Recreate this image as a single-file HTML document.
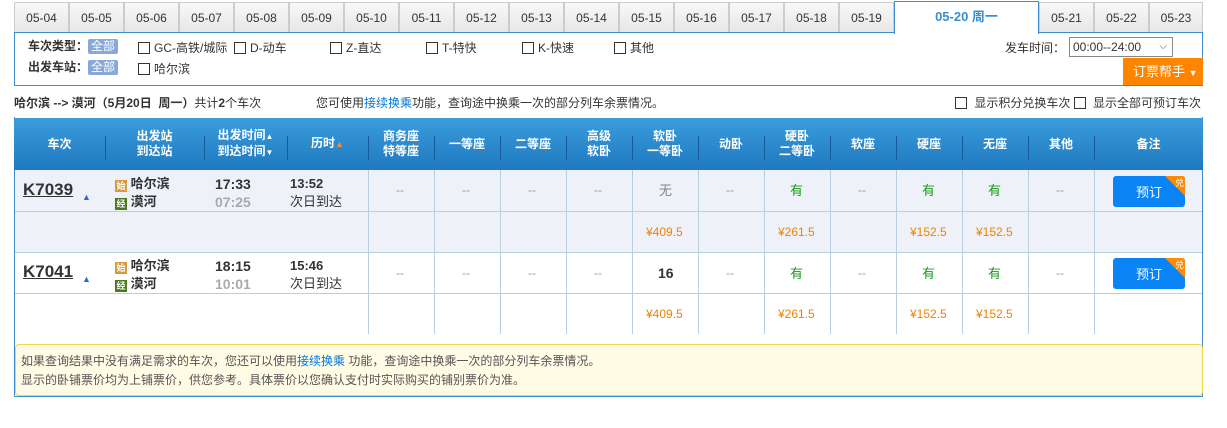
<!DOCTYPE html><html><head><meta charset="utf-8"><style>
*{margin:0;padding:0;box-sizing:border-box}
body{width:1227px;height:428px;background:#fff;font-family:"Liberation Sans","Noto Sans CJK SC",sans-serif;font-size:12px;color:#333;position:relative;overflow:hidden}
.a{position:absolute}
.tab{position:absolute;top:2px;height:31px;width:55px;border:1px solid #ccc;border-bottom:none;background:linear-gradient(#f8f8f8,#e6e6e6);text-align:center;line-height:30px;color:#333;font-size:12px}
.cb{display:inline-block;width:12px;height:12px;border:1px solid #333;vertical-align:-2px;margin-right:4px;background:#fff}
.all{display:inline-block;background:#87a8d8;color:#fff;padding:0 3px;line-height:15px;border-radius:2px;font-weight:normal}
.hd{position:absolute;top:118px;height:52px;background:linear-gradient(#3a9ddb,#1f78c0);color:#fff;font-weight:bold;}
.hc{position:absolute;top:0;height:52px;display:flex;align-items:center;justify-content:center;text-align:center;line-height:15px;font-size:12px;white-space:nowrap}
.sep{position:absolute;top:18px;height:24px;width:1px;background:#1a5a9a}
.dash{color:#999}
.y{color:#1a9a1a;font-size:13px}
.p{color:#f08200;font-size:12px}
.btn{position:absolute;width:72px;height:31px;background:#0a84f5;border-radius:3px;color:#fff;font-size:13px;display:flex;align-items:center;justify-content:center;overflow:hidden}
.btn:after{content:"";position:absolute;right:0;top:0;border-top:20px solid #ff8a00;border-left:20px solid transparent}
.btn i{position:absolute;right:1px;top:0;font-style:normal;font-size:9px;z-index:2;color:#fff}
.ic{display:inline-block;width:12px;height:12px;color:#fff;font-size:9px;line-height:12px;text-align:center;vertical-align:-1px}
</style></head><body>
<div class="tab" style="left:14px">05-04</div><div class="tab" style="left:69px">05-05</div><div class="tab" style="left:124px">05-06</div><div class="tab" style="left:179px">05-07</div><div class="tab" style="left:234px">05-08</div><div class="tab" style="left:289px">05-09</div><div class="tab" style="left:344px">05-10</div><div class="tab" style="left:399px">05-11</div><div class="tab" style="left:454px">05-12</div><div class="tab" style="left:509px">05-13</div><div class="tab" style="left:564px">05-14</div><div class="tab" style="left:619px">05-15</div><div class="tab" style="left:674px">05-16</div><div class="tab" style="left:729px">05-17</div><div class="tab" style="left:784px">05-18</div><div class="tab" style="left:839px">05-19</div>
<div class="a" style="left:894px;top:1px;width:145px;height:33px;background:#fff;border:1px solid #3c8dd0;border-bottom:none;text-align:center;line-height:30px;color:#3c8dd0;font-weight:bold;font-size:13px;z-index:2">05-20 周一</div>
<div class="tab" style="left:1039px">05-21</div><div class="tab" style="left:1094px">05-22</div><div class="tab" style="left:1149px;width:54px">05-23</div>
<div class="a" style="left:14px;top:32px;width:1189px;height:54px;border:1px solid #3c8dd0"></div>
<div class="a" style="left:28px;top:38px;line-height:16px"><b>车次类型：</b><span class="all">全部</span></div>
<div class="a" style="left:138px;top:39px"><span class="cb"></span>GC-高铁/城际</div>
<div class="a" style="left:234px;top:39px"><span class="cb"></span>D-动车</div>
<div class="a" style="left:330px;top:39px"><span class="cb"></span>Z-直达</div>
<div class="a" style="left:426px;top:39px"><span class="cb"></span>T-特快</div>
<div class="a" style="left:522px;top:39px"><span class="cb"></span>K-快速</div>
<div class="a" style="left:614px;top:39px"><span class="cb"></span>其他</div>
<div class="a" style="left:28px;top:59px;line-height:16px"><b>出发车站：</b><span class="all">全部</span></div>
<div class="a" style="left:138px;top:60px"><span class="cb"></span>哈尔滨</div>
<div class="a" style="left:1005px;top:39px">发车时间：</div>
<div class="a" style="left:1069px;top:37px;width:104px;height:20px;border:1px solid #888;line-height:18px;padding-left:3px">00:00--24:00<span style="position:absolute;right:5px;top:0;font-size:10px;color:#555">⌵</span></div>
<div class="a" style="left:1123px;top:58px;width:80px;height:27px;background:#ff8400;color:#fff;line-height:27px;padding-left:10px;font-size:13px">订票帮手 <span style="font-size:9px">▼</span></div>
<div class="a" style="left:14px;top:94px;font-size:12px"><b>哈尔滨 --&gt; 漠河（5月20日&nbsp; 周一）</b>共计<b>2</b>个车次</div>
<div class="a" style="left:316px;top:94px">您可使用<span style="color:#0077dd">接续换乘</span>功能，查询途中换乘一次的部分列车余票情况。</div>
<div class="a" style="left:955px;top:94px"><span class="cb"></span> 显示积分兑换车次 <span class="cb"></span> 显示全部可预订车次</div>
<div class="a" style="left:14px;top:117px;width:1189px;height:280px;border:1px solid #3c8dd0;border-top:none"></div>
<div class="hd" style="left:14px;width:1189px">
<div class="hc" style="left:0;width:91px">车次</div><div class="sep" style="left:91px"></div>
<div class="hc" style="left:91px;width:99px">出发站<br>到达站</div><div class="sep" style="left:190px"></div>
<div class="hc" style="left:190px;width:83px"><div>出发时间<span style="font-size:8px">▲</span><br>到达时间<span style="font-size:8px">▼</span></div></div><div class="sep" style="left:273px"></div>
<div class="hc" style="left:273px;width:81px"><div>历时<span style="color:#f08a3c;font-size:9px">▲</span></div></div><div class="sep" style="left:354px"></div>
<div class="hc" style="left:354px;width:66px">商务座<br>特等座</div><div class="sep" style="left:420px"></div>
<div class="hc" style="left:420px;width:66px">一等座</div><div class="sep" style="left:486px"></div>
<div class="hc" style="left:486px;width:66px">二等座</div><div class="sep" style="left:552px"></div>
<div class="hc" style="left:552px;width:66px">高级<br>软卧</div><div class="sep" style="left:618px"></div>
<div class="hc" style="left:618px;width:66px">软卧<br>一等卧</div><div class="sep" style="left:684px"></div>
<div class="hc" style="left:684px;width:66px">动卧</div><div class="sep" style="left:750px"></div>
<div class="hc" style="left:750px;width:66px">硬卧<br>二等卧</div><div class="sep" style="left:816px"></div>
<div class="hc" style="left:816px;width:66px">软座</div><div class="sep" style="left:882px"></div>
<div class="hc" style="left:882px;width:66px">硬座</div><div class="sep" style="left:948px"></div>
<div class="hc" style="left:948px;width:66px">无座</div><div class="sep" style="left:1014px"></div>
<div class="hc" style="left:1014px;width:66px">其他</div><div class="sep" style="left:1080px"></div>
<div class="hc" style="left:1080px;width:109px">备注</div>
</div>
<div class="a" style="left:15px;top:170px;width:1187px;height:83px;background:#eef1f8"></div>
<div class="a" style="left:15px;top:211px;width:1187px;height:1px;background:#b8cfe0"></div>
<div class="a" style="left:15px;top:252px;width:1187px;height:1px;background:#b8cfe0"></div>
<div class="a" style="left:15px;top:293px;width:1187px;height:1px;background:#b8cfe0"></div>
<div class="a" style="left:368px;top:170px;width:1px;height:164px;background:#b8cfe0"></div>
<div class="a" style="left:434px;top:170px;width:1px;height:164px;background:#b8cfe0"></div>
<div class="a" style="left:500px;top:170px;width:1px;height:164px;background:#b8cfe0"></div>
<div class="a" style="left:566px;top:170px;width:1px;height:164px;background:#b8cfe0"></div>
<div class="a" style="left:632px;top:170px;width:1px;height:164px;background:#b8cfe0"></div>
<div class="a" style="left:698px;top:170px;width:1px;height:164px;background:#b8cfe0"></div>
<div class="a" style="left:764px;top:170px;width:1px;height:164px;background:#b8cfe0"></div>
<div class="a" style="left:830px;top:170px;width:1px;height:164px;background:#b8cfe0"></div>
<div class="a" style="left:896px;top:170px;width:1px;height:164px;background:#b8cfe0"></div>
<div class="a" style="left:962px;top:170px;width:1px;height:164px;background:#b8cfe0"></div>
<div class="a" style="left:1028px;top:170px;width:1px;height:164px;background:#b8cfe0"></div>
<div class="a" style="left:1094px;top:170px;width:1px;height:164px;background:#b8cfe0"></div>

<div class="a" style="left:23px;top:180px;font-size:17px;font-weight:bold;text-decoration:underline;color:#333">K7039</div>
<div class="a" style="left:82px;top:192px;font-size:9px;color:#1a73d0">▲</div>
<div class="a" style="left:115px;top:175px;line-height:18px;font-size:13px;font-weight:bold"><span class="ic" style="background:#d79a3c">始</span> 哈尔滨<br><span class="ic" style="background:#4a7a1a">经</span> 漠河</div>
<div class="a" style="left:215px;top:175px;line-height:18px;font-size:14px;font-weight:bold">17:33<br><span style="color:#aaa">07:25</span></div>
<div class="a" style="left:290px;top:175px;line-height:18px;font-size:13px"><b>13:52</b><br>次日到达</div>
<div class="a" style="top:170px;height:41px;left:0;width:1227px;line-height:41px">
<span class="a dash" style="left:396px">--</span><span class="a dash" style="left:462px">--</span><span class="a dash" style="left:528px">--</span><span class="a dash" style="left:594px">--</span>
<span class="a" style="left:659px;color:#888;font-size:13px">无</span><span class="a dash" style="left:726px">--</span><span class="a y" style="left:790px">有</span><span class="a dash" style="left:858px">--</span><span class="a y" style="left:922px">有</span><span class="a y" style="left:988px">有</span><span class="a dash" style="left:1056px">--</span></div>
<div class="btn" style="left:1113px;top:176px"><i>兑</i>预订</div>
<div class="a p" style="left:646px;top:225px">¥409.5</div><div class="a p" style="left:778px;top:225px">¥261.5</div><div class="a p" style="left:910px;top:225px">¥152.5</div><div class="a p" style="left:976px;top:225px">¥152.5</div>

<div class="a" style="left:23px;top:262px;font-size:17px;font-weight:bold;text-decoration:underline;color:#333">K7041</div>
<div class="a" style="left:82px;top:274px;font-size:9px;color:#1a73d0">▲</div>
<div class="a" style="left:115px;top:257px;line-height:18px;font-size:13px;font-weight:bold"><span class="ic" style="background:#d79a3c">始</span> 哈尔滨<br><span class="ic" style="background:#4a7a1a">经</span> 漠河</div>
<div class="a" style="left:215px;top:257px;line-height:18px;font-size:14px;font-weight:bold">18:15<br><span style="color:#aaa">10:01</span></div>
<div class="a" style="left:290px;top:257px;line-height:18px;font-size:13px"><b>15:46</b><br>次日到达</div>
<div class="a" style="top:253px;height:41px;left:0;width:1227px;line-height:41px">
<span class="a dash" style="left:396px">--</span><span class="a dash" style="left:462px">--</span><span class="a dash" style="left:528px">--</span><span class="a dash" style="left:594px">--</span>
<span class="a" style="left:658px;font-weight:bold;font-size:14px">16</span><span class="a dash" style="left:726px">--</span><span class="a y" style="left:790px">有</span><span class="a dash" style="left:858px">--</span><span class="a y" style="left:922px">有</span><span class="a y" style="left:988px">有</span><span class="a dash" style="left:1056px">--</span></div>
<div class="btn" style="left:1113px;top:258px"><i>兑</i>预订</div>
<div class="a p" style="left:646px;top:307px">¥409.5</div><div class="a p" style="left:778px;top:307px">¥261.5</div><div class="a p" style="left:910px;top:307px">¥152.5</div><div class="a p" style="left:976px;top:307px">¥152.5</div>

<div class="a" style="left:15px;top:344px;width:1188px;height:52px;background:#fffbe5;border:1px solid #f5d34a;border-radius:4px;padding:7px 0 0 5px;line-height:19px;color:#555;font-size:12px">如果查询结果中没有满足需求的车次，您还可以使用<span style="color:#0077dd">接续换乘</span> 功能，查询途中换乘一次的部分列车余票情况。<br>显示的卧铺票价均为上铺票价，供您参考。具体票价以您确认支付时实际购买的铺别票价为准。</div>
</body></html>
